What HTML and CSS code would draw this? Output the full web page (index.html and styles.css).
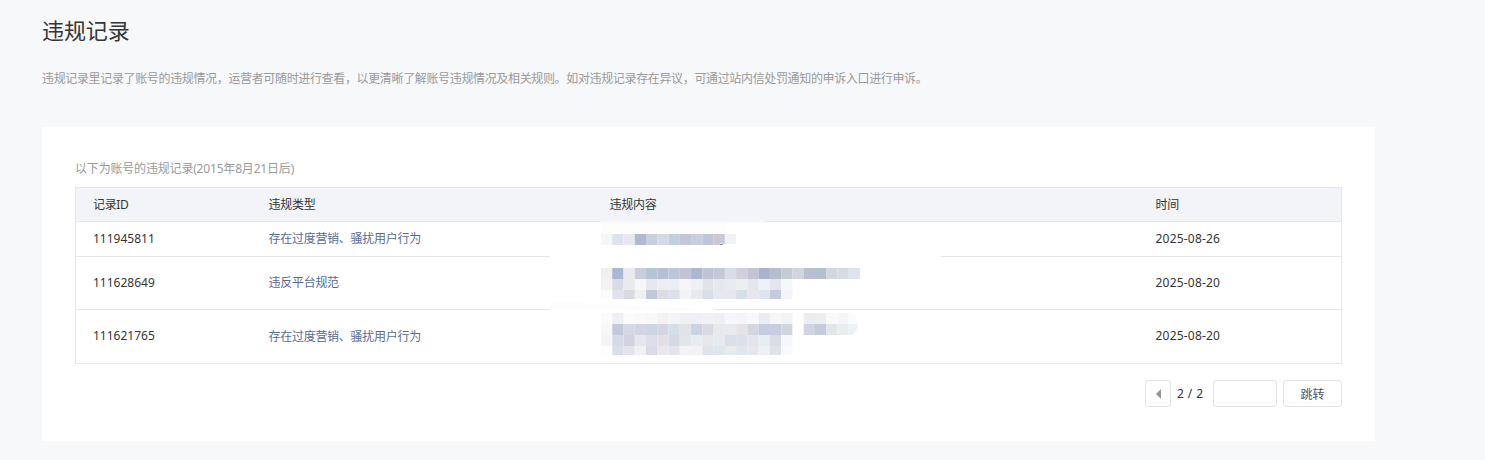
FILE: index.html
```html
<!DOCTYPE html>
<html lang="zh-CN">
<head>
<meta charset="utf-8">
<title>违规记录</title>
<link rel="stylesheet" href="styles.css">
</head>
<body>
<main class="page">
  <h1 class="title">违规记录</h1>
  <p class="desc">违规记录里记录了账号的违规情况，运营者可随时进行查看，以更清晰了解账号违规情况及相关规则。如对违规记录存在异议，可通过站内信处罚通知的申诉入口进行申诉。</p>
  <section class="card">
    <p class="caption">以下为账号的违规记录(2015年8月21日后)</p>
    <div class="table-wrap">
      <table class="records">
        <colgroup><col class="col-id"><col class="col-type"><col class="col-content"><col></colgroup>
        <thead>
          <tr class="row-head"><th class="first">记录ID</th><th>违规类型</th><th class="third">违规内容</th><th>时间</th></tr>
        </thead>
        <tbody>
          <tr class="row-a"><td class="first">111945811</td><td class="link">存在过度营销、骚扰用户行为</td><td></td><td class="date">2025-08-26</td></tr>
          <tr class="row-b"><td class="first">111628649</td><td class="link">违反平台规范</td><td></td><td class="date">2025-08-20</td></tr>
          <tr class="row-c"><td class="first">111621765</td><td class="link">存在过度营销、骚扰用户行为</td><td></td><td class="date">2025-08-20</td></tr>
        </tbody>
      </table>
      <svg class="mosaic" viewBox="550 220 392 140" width="392" height="140" aria-hidden="true">
        <rect x="550" y="255" width="391" height="3" fill="#fff"/>
        <path d="M600 221H765V223H600Z" fill="#f8f9fb"/>
        <path d="M550 303Q560 301 580 303L700 309H715V310H550Z" fill="#fcfcfc"/>
        <g class="cells" transform="translate(601 0) scale(11.26 1)">
          <rect x="0" y="223" width="11" height="11" fill="#fdfdfc"/>
          <rect x="0" y="234" width="1" height="11" fill="#f6f6f6"/><rect x="1" y="234" width="1" height="11" fill="#dde4ee"/><rect x="2" y="234" width="1" height="11" fill="#e8e9ed"/><rect x="3" y="234" width="1" height="11" fill="#b0b9d2"/><rect x="4" y="234" width="1" height="11" fill="#c8cfde"/><rect x="5" y="234" width="1" height="11" fill="#d5d9e5"/><rect x="6" y="234" width="1" height="11" fill="#c3cfdf"/><rect x="7" y="234" width="1" height="11" fill="#c5c7d8"/><rect x="8" y="234" width="1" height="11" fill="#c6cfdd"/><rect x="9" y="234" width="1" height="11" fill="#bfc6da"/><rect x="10" y="234" width="1" height="11" fill="#c8c8d4"/><rect x="11" y="234" width="1" height="11" fill="#f1f2f6"/>

          <rect x="0" y="268" width="1" height="11" fill="#f1eff1"/><rect x="1" y="268" width="1" height="11" fill="#aab7d0"/><rect x="2" y="268" width="1" height="11" fill="#e9eaec"/><rect x="3" y="268" width="1" height="11" fill="#c9cddd"/><rect x="4" y="268" width="1" height="11" fill="#b5c5d3"/><rect x="5" y="268" width="1" height="11" fill="#b9bfd2"/><rect x="6" y="268" width="1" height="11" fill="#bcc6da"/><rect x="7" y="268" width="1" height="11" fill="#c2c3d4"/><rect x="8" y="268" width="1" height="11" fill="#abb8d0"/><rect x="9" y="268" width="1" height="11" fill="#c0c3d4"/><rect x="10" y="268" width="1" height="11" fill="#c4c8d9"/><rect x="11" y="268" width="1" height="11" fill="#d9dde7"/><rect x="12" y="268" width="1" height="11" fill="#d1cfdb"/><rect x="13" y="268" width="1" height="11" fill="#c2c3d3"/><rect x="14" y="268" width="1" height="11" fill="#abb2cd"/><rect x="15" y="268" width="1" height="11" fill="#b6bdcd"/><rect x="16" y="268" width="1" height="11" fill="#c2ccd2"/><rect x="17" y="268" width="1" height="11" fill="#d1d5e0"/><rect x="18" y="268" width="1" height="11" fill="#b9bfd2"/><rect x="19" y="268" width="1" height="11" fill="#b3c0d0"/><rect x="20" y="268" width="1" height="11" fill="#d2d6e0"/><rect x="21" y="268" width="1" height="11" fill="#d5dce2"/><rect x="22" y="268" width="1" height="11" fill="#dce4ee"/>

          <rect x="0" y="279" width="1" height="11" fill="#f3f3f6"/><rect x="1" y="279" width="1" height="11" fill="#d8dce6"/><rect x="2" y="279" width="1" height="11" fill="#e9eaec"/><rect x="3" y="279" width="1" height="11" fill="#f6f7f9"/><rect x="4" y="279" width="1" height="11" fill="#e6e8ee"/><rect x="5" y="279" width="1" height="11" fill="#ebedf0"/><rect x="6" y="279" width="1" height="11" fill="#e9eef2"/><rect x="7" y="279" width="1" height="11" fill="#f6f6f8"/><rect x="8" y="279" width="1" height="11" fill="#eff0f3"/><rect x="9" y="279" width="1" height="11" fill="#e2e3e9"/><rect x="10" y="279" width="1" height="11" fill="#e5e8ee"/><rect x="11" y="279" width="1" height="11" fill="#e8ebf2"/><rect x="12" y="279" width="1" height="11" fill="#ebeff2"/><rect x="13" y="279" width="1" height="11" fill="#e4e6ed"/><rect x="14" y="279" width="1" height="11" fill="#ecf0f7"/><rect x="15" y="279" width="1" height="11" fill="#e2e5ed"/><rect x="16" y="279" width="1" height="11" fill="#f6f7fa"/>

          <rect x="0" y="290" width="1" height="9" fill="#fbfbf9"/><rect x="1" y="290" width="1" height="9" fill="#e0e3ed"/><rect x="2" y="290" width="1" height="9" fill="#d7dae3"/><rect x="3" y="290" width="1" height="9" fill="#f0f0f2"/><rect x="4" y="290" width="1" height="9" fill="#c3c7da"/><rect x="5" y="290" width="1" height="9" fill="#dcdce3"/><rect x="6" y="290" width="1" height="9" fill="#dbe0e9"/><rect x="7" y="290" width="1" height="9" fill="#f3f3f6"/><rect x="8" y="290" width="1" height="9" fill="#e9eaee"/><rect x="9" y="290" width="1" height="9" fill="#d8dee7"/><rect x="10" y="290" width="1" height="9" fill="#e5e8ef"/><rect x="11" y="290" width="1" height="9" fill="#e6e8ee"/><rect x="12" y="290" width="1" height="9" fill="#d6dee6"/><rect x="13" y="290" width="1" height="9" fill="#e7e6eb"/><rect x="14" y="290" width="1" height="9" fill="#dfe5ef"/><rect x="15" y="290" width="1" height="9" fill="#c4cbdc"/><rect x="16" y="290" width="1" height="9" fill="#f3f4f8"/>

          <rect x="0" y="313" width="1" height="11" fill="#fbfbfb"/><rect x="1" y="313" width="1" height="11" fill="#eff0f4"/><rect x="2" y="313" width="1" height="11" fill="#fcfcfa"/><rect x="3" y="313" width="1" height="11" fill="#f9fafb"/><rect x="4" y="313" width="1" height="11" fill="#f7f8fa"/><rect x="5" y="313" width="1" height="11" fill="#f2f2f4"/><rect x="6" y="313" width="1" height="11" fill="#f4f5f8"/><rect x="7" y="313" width="1" height="11" fill="#eff0f3"/><rect x="8" y="313" width="1" height="11" fill="#eef0f4"/><rect x="9" y="313" width="1" height="11" fill="#f1f1f4"/><rect x="10" y="313" width="1" height="11" fill="#eff0f3"/><rect x="11" y="313" width="1" height="11" fill="#f6f7fa"/><rect x="12" y="313" width="1" height="11" fill="#f4f5f8"/><rect x="13" y="313" width="1" height="11" fill="#f8f8fa"/><rect x="14" y="313" width="1" height="11" fill="#ecedf2"/><rect x="15" y="313" width="1" height="11" fill="#f5f6f8"/><rect x="16" y="313" width="1" height="11" fill="#f2f3f5"/><rect x="18" y="313" width="1" height="11" fill="#ecedf1"/><rect x="19" y="313" width="1" height="11" fill="#eceef0"/><rect x="20" y="313" width="1" height="11" fill="#f9f9fa"/><rect x="21" y="313" width="1" height="11" fill="#f5f6f9"/>

          <rect x="0" y="324" width="1" height="11" fill="#f9f8f9"/><rect x="1" y="324" width="1" height="11" fill="#c4cadb"/><rect x="2" y="324" width="1" height="11" fill="#d6d9e3"/><rect x="3" y="324" width="1" height="11" fill="#d2d5e2"/><rect x="4" y="324" width="1" height="11" fill="#cdd5e1"/><rect x="5" y="324" width="1" height="11" fill="#d2d6e2"/><rect x="6" y="324" width="1" height="11" fill="#d5dfe9"/><rect x="7" y="324" width="1" height="11" fill="#e2e3e8"/><rect x="8" y="324" width="1" height="11" fill="#cbd3e2"/><rect x="9" y="324" width="1" height="11" fill="#d8d9e2"/><rect x="10" y="324" width="1" height="11" fill="#e8e9ed"/><rect x="11" y="324" width="1" height="11" fill="#e9eaef"/><rect x="12" y="324" width="1" height="11" fill="#e6e3e8"/><rect x="13" y="324" width="1" height="11" fill="#d3d6df"/><rect x="14" y="324" width="1" height="11" fill="#c5cce0"/><rect x="15" y="324" width="1" height="11" fill="#c8cce0"/><rect x="16" y="324" width="1" height="11" fill="#d1d6de"/><rect x="18" y="324" width="1" height="11" fill="#d2d3e2"/><rect x="19" y="324" width="1" height="11" fill="#c5cbda"/><rect x="20" y="324" width="1" height="11" fill="#e2e6eb"/><rect x="21" y="324" width="1" height="11" fill="#e8edee"/>

          <rect x="0" y="335" width="1" height="11" fill="#f5f5f5"/><rect x="1" y="335" width="1" height="11" fill="#d5dce9"/><rect x="2" y="335" width="1" height="11" fill="#d3d2df"/><rect x="3" y="335" width="1" height="11" fill="#e4e7f0"/><rect x="4" y="335" width="1" height="11" fill="#dcdde8"/><rect x="5" y="335" width="1" height="11" fill="#e0e0e5"/><rect x="6" y="335" width="1" height="11" fill="#d4d9e3"/><rect x="7" y="335" width="1" height="11" fill="#e1e5ec"/><rect x="8" y="335" width="1" height="11" fill="#e8ebf3"/><rect x="9" y="335" width="1" height="11" fill="#e6e6eb"/><rect x="10" y="335" width="1" height="11" fill="#e6e9f0"/><rect x="11" y="335" width="1" height="11" fill="#dbdfe8"/><rect x="12" y="335" width="1" height="11" fill="#dce2eb"/><rect x="13" y="335" width="1" height="11" fill="#e3e5ec"/><rect x="14" y="335" width="1" height="11" fill="#e6edf3"/><rect x="15" y="335" width="1" height="11" fill="#dadde6"/><rect x="16" y="335" width="1" height="11" fill="#f6f7fb"/>

          <rect x="0" y="346" width="1" height="9" fill="#fdfdfc"/><rect x="1" y="346" width="1" height="9" fill="#d9dfe9"/><rect x="2" y="346" width="1" height="9" fill="#e1e4ed"/><rect x="3" y="346" width="1" height="9" fill="#f1f1f3"/><rect x="4" y="346" width="1" height="9" fill="#dadae6"/><rect x="5" y="346" width="1" height="9" fill="#e7e7ec"/><rect x="6" y="346" width="1" height="9" fill="#e1e6ed"/><rect x="7" y="346" width="1" height="9" fill="#f3f3f6"/><rect x="8" y="346" width="1" height="9" fill="#f2f2f4"/><rect x="9" y="346" width="1" height="9" fill="#dfe3ea"/><rect x="10" y="346" width="1" height="9" fill="#dde5ed"/><rect x="11" y="346" width="1" height="9" fill="#e8eaee"/><rect x="12" y="346" width="1" height="9" fill="#e1e6ed"/><rect x="13" y="346" width="1" height="9" fill="#e6e6eb"/><rect x="14" y="346" width="1" height="9" fill="#eef0f3"/><rect x="15" y="346" width="1" height="9" fill="#dfe2e9"/><rect x="16" y="346" width="1" height="9" fill="#f8f9fb"/>
        </g>
        <path d="M848 313H851Q858 317 858 324H848Z" fill="#fafbfd"/>
        <path d="M848 324H858Q858 331 852 335H848Z" fill="#eef2f8"/>
        <rect x="720" y="243" width="6" height="1" fill="#d8d8e2"/>
        <rect x="720" y="244" width="3" height="1" fill="#8a94b8"/>
        <rect x="723" y="244" width="14" height="1" fill="#fff"/>
      </svg>
    </div>
    <nav class="pager">
      <button class="pager-btn pager-prev" type="button" aria-label="上一页"><span class="arrow-left"></span></button>
      <span class="pager-num">2 / 2</span>
      <input class="pager-input" type="text" aria-label="页码">
      <button class="pager-btn pager-go" type="button">跳转</button>
    </nav>
  </section>
</main>
</body>
</html>
```
FILE: styles.css
```css
* { box-sizing: border-box; }
html, body { margin: 0; height: 460px; overflow: hidden; }
body {
  background: #f7f8fa;
  color: #353535;
  font-family: "Noto Sans", "Noto Sans CJK SC", sans-serif;
  font-size: 12px;
}
.page { padding: 15px 110px 0 42px; }
.title {
  margin: 0;
  font-size: 22px;
  font-weight: 400;
  line-height: 30px;
  color: #353535;
  letter-spacing: -0.1px;
}
.desc {
  margin: 19px 0 0;
  font-size: 12px;
  line-height: 30px;
  color: #9a9a9a;
  letter-spacing: -0.35px;
  white-space: nowrap;
}
.card {
  margin-top: 33px;
  height: 314px;
  padding: 33px 33px 0;
  background: #fff;
  border-radius: 2px;
}
.caption {
  margin: 0;
  height: 27px;
  line-height: 17px;
  color: #9a9a9a;
  letter-spacing: -0.18px;
}
.table-wrap { position: relative; }
.records {
  width: 100%;
  border-collapse: collapse;
  table-layout: fixed;
  border: 1px solid #e6e7eb;
}
.col-id { width: 175px; }
.col-type { width: 342px; }
.col-content { width: 545px; }
.records th, .records td {
  padding: 0 0 2px 18px;
  border-bottom: 1px solid #e6e7eb;
  font-size: 12px;
  font-weight: 400;
  text-align: left;
  vertical-align: middle;
  color: #353535;
}
.records th { background: #f3f4f8; letter-spacing: -0.25px; }
.records .first { padding-left: 17px; }
.records .third { padding-left: 17px; }
.records th.first { letter-spacing: -0.35px; }
.row-head { height: 34px; }
.row-a { height: 35px; }
.row-b { height: 53px; }
.row-c { height: 54px; }
.records td.link { color: #576b95; letter-spacing: -0.28px; }
.records td.date { letter-spacing: 0.2px; }
.mosaic { position: absolute; left: 475px; top: 33px; display: block; }
.pager {
  display: flex;
  justify-content: flex-end;
  align-items: center;
  margin-top: 16px;
}
.pager-btn, .pager-input {
  height: 27px;
  padding: 0;
  border: 1px solid #e5e5e5;
  border-radius: 3px;
  background: #fff;
  font: inherit;
  color: #353535;
}
.pager-prev {
  width: 26px;
  display: flex;
  align-items: center;
  justify-content: center;
}
.arrow-left {
  width: 0;
  height: 0;
  border-style: solid;
  border-width: 5px 5px 5px 0;
  border-color: transparent #959595 transparent transparent;
}
.pager-num { margin: 0 10px 0 6px; width: 26px; white-space: nowrap; letter-spacing: 0.4px; }
.pager-input { width: 64px; margin-right: 6px; }
.pager-go { width: 59px; color: #4a5568; }
```
